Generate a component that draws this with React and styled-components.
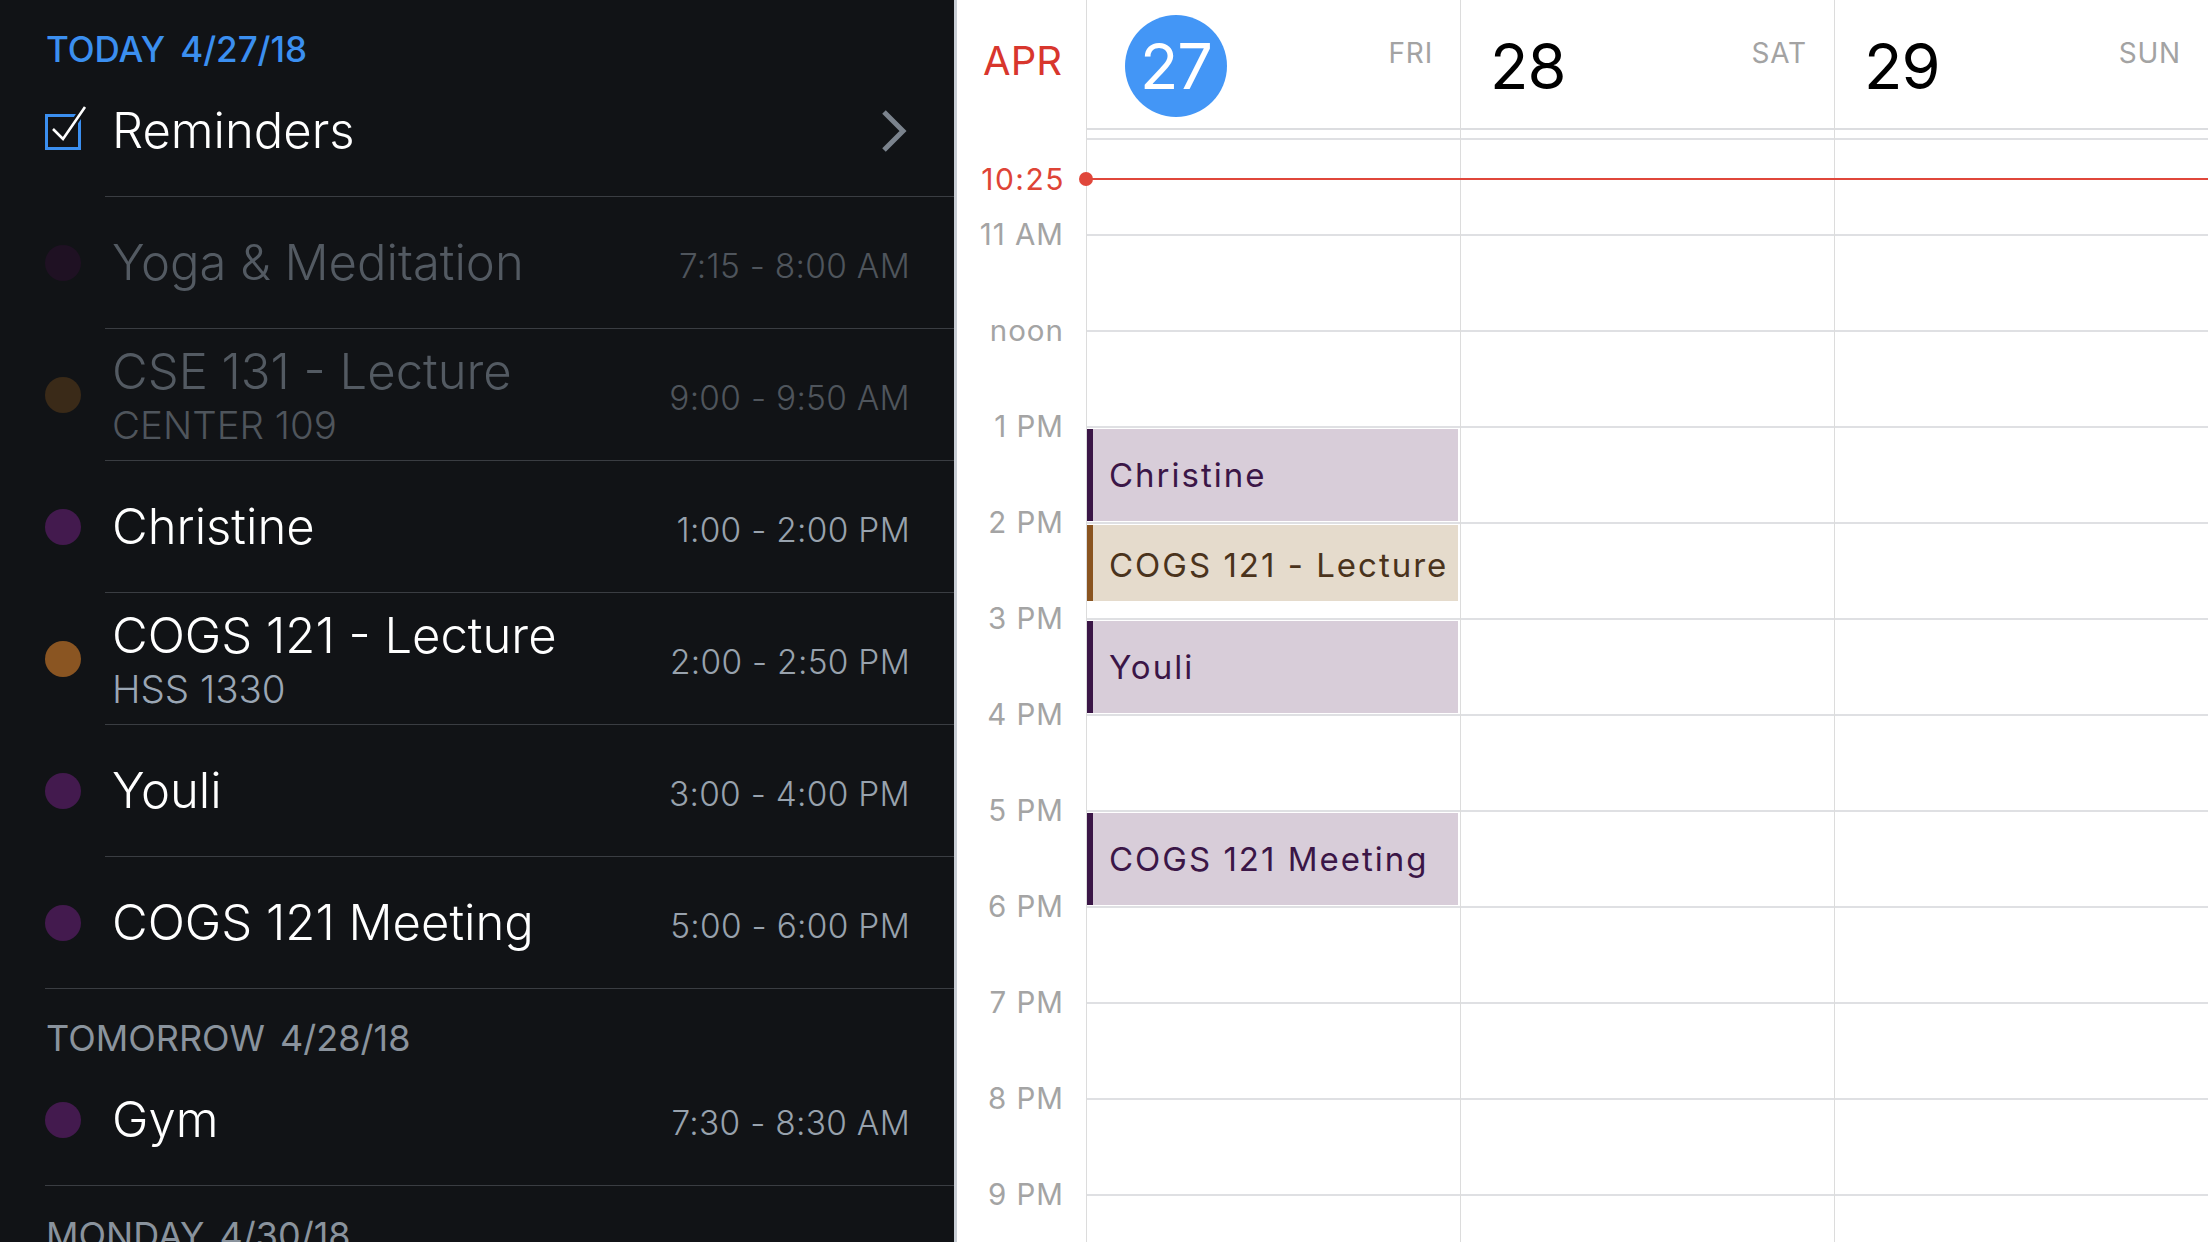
import React from "react";
import styled, { createGlobalStyle } from "styled-components";

const HOUR = 96;

const GlobalStyle = createGlobalStyle`
  html, body {
    margin: 0;
    padding: 0;
    background: #111316;
  }
  body {
    width: 2208px;
    height: 1242px;
    overflow: hidden;
    font-family: Inter, "Noto Sans", "Liberation Sans", sans-serif;
  }
  * {
    box-sizing: border-box;
  }
`;

const Screen = styled.div`
  display: flex;
  width: 2208px;
  height: 1242px;
  overflow: hidden;
`;

/* ---------- left list ---------- */

const Sidebar = styled.div`
  width: 957px;
  flex: none;
  background: #111316;
  border-right: 3px solid #c8cdd4;
  overflow: hidden;
  color: #fff;
`;

const SectionHead = styled.div`
  height: 65px;
  padding: ${(p) => (p.$today ? 32 : 31)}px 0 0 46px;
  font-size: ${(p) => (p.$today ? "35px" : "36px")};
  line-height: 1;
  font-weight: ${(p) => (p.$today ? 500 : 400)};
  color: ${(p) => (p.$today ? "#3b8ff0" : "#8a939d")};
  white-space: nowrap;

  span + span {
    margin-left: 15px;
  }
`;

const Row = styled.div`
  height: 131px;
  display: flex;
  align-items: center;
  padding: 0 44px 0 45px;
`;

const Rule = styled.div`
  height: 1px;
  margin-left: ${(p) => p.$inset}px;
  background: #3a3d42;
`;

const CheckIcon = styled.svg`
  flex: none;
  width: 42px;
  height: 46px;
  margin: -6px 25px 0 0;
`;

const RowTitle = styled.div`
  flex: 1;
  font-size: 49px;
  font-weight: 300;
  line-height: 60px;
  color: ${(p) => (p.$past ? "#535a62" : "#ffffff")};
  white-space: nowrap;
`;

const Chevron = styled.svg`
  flex: none;
  width: 27px;
  height: 44px;
  margin-right: 3px;
`;

const Dot = styled.div`
  flex: none;
  width: 36px;
  height: 36px;
  border-radius: 50%;
  margin-right: 31px;
  background: ${(p) => p.$color};
`;

const TitleBlock = styled.div`
  flex: 1;
  display: flex;
  flex-direction: column;
  min-width: 0;
`;

const SubTitle = styled.div`
  font-size: 38.5px;
  font-weight: 300;
  line-height: 46px;
  color: ${(p) => (p.$past ? "#4f555c" : "#9aa6b4")};
  white-space: nowrap;
`;

const TimeRange = styled.div`
  flex: none;
  padding-top: 7px;
  font-size: 33.4px;
  font-weight: 300;
  letter-spacing: 0.3px;
  color: ${(p) => (p.$past ? "#4f555c" : "#98a2ad")};
  white-space: nowrap;
`;

/* ---------- right calendar ---------- */

const Calendar = styled.div`
  flex: 1;
  display: flex;
  flex-direction: column;
  background: #ffffff;
  overflow: hidden;
`;

const HeadRow = styled.div`
  display: grid;
  grid-template-columns: 129px repeat(3, 1fr);
  flex: none;
`;

const MonthCell = styled.div`
  padding: 41px 24px 0 0;
  text-align: right;
  font-size: 40px;
  line-height: 1;
  color: #d8362d;
`;

const DayHead = styled.div`
  display: flex;
  flex-direction: column;
  border-left: 1px solid #dcdcdc;
`;

const DayTop = styled.div`
  height: 130px;
  display: flex;
  justify-content: space-between;
  align-items: flex-start;
  padding: 0 27px 0 ${(p) => (p.$today ? 38 : 29)}px;
  border-bottom: 2px solid #dcdde0;
`;

const DayNum = styled.div`
  width: ${(p) => (p.$today ? "102px" : "auto")};
  height: 102px;
  margin-top: 15px;
  display: flex;
  align-items: center;
  justify-content: center;
  border-radius: 50%;
  background: ${(p) => (p.$today ? "#4396f6" : "transparent")};
  color: ${(p) => (p.$today ? "#ffffff" : "#000000")};
  font-size: 63px;
  line-height: 1;
  letter-spacing: -1px;
`;

const DayName = styled.div`
  margin-top: 39px;
  font-size: 28px;
  line-height: 1;
  letter-spacing: 0.8px;
  color: #a3a3a3;
`;

const AllDayStrip = styled.div`
  height: 8px;
`;

const Body = styled.div`
  flex: 1;
  position: relative;
  display: grid;
  grid-template-columns: 129px repeat(3, 1fr);
  overflow: hidden;
`;

const Gutter = styled.div`
  display: flex;
  flex-direction: column;
  padding-top: 48px;
`;

const HourLabel = styled.div`
  height: ${HOUR}px;
  flex: none;
  display: flex;
  align-items: center;
  justify-content: flex-end;
  padding-right: 22px;
  font-size: 29.5px;
  letter-spacing: 1px;
  color: #a4a4a4;
`;

const DayColumn = styled.div`
  position: relative;
  display: flex;
  flex-direction: column;
  border-left: 1px solid #dcdcdc;
`;

const HourCell = styled.div`
  height: ${HOUR}px;
  flex: none;
  border-top: 2px solid #dfe0e3;
`;

const EventBlock = styled.div`
  position: absolute;
  left: 0;
  right: 2px;
  padding: 26px 0 0 16px;
  background: ${(p) => p.$bg};
  border-left: 6px solid ${(p) => p.$bar};
  color: ${(p) => p.$ink};
  font-size: 33px;
  letter-spacing: 2px;
  line-height: 40px;
  white-space: nowrap;
  overflow: hidden;
`;

const NowMarker = styled.div`
  position: absolute;
  left: 0;
  right: 0;
  top: 23px;
  height: 30px;
  display: grid;
  grid-template-columns: 129px 1fr;
  align-items: center;
  pointer-events: none;
`;

const NowLabel = styled.div`
  padding-right: 21px;
  text-align: right;
  font-size: 30px;
  letter-spacing: 1.5px;
  color: #de4436;
`;

const NowLine = styled.div`
  position: relative;
  height: 2px;
  background: #e0473b;

  &::before {
    content: "";
    position: absolute;
    left: -7px;
    top: -6px;
    width: 14px;
    height: 14px;
    border-radius: 50%;
    background: #e0473b;
  }
`;

const PURPLE = "#431a4e";
const ORANGE = "#8a5522";

const today = [
  { title: "Yoga & Meditation", time: "7:15 - 8:00 AM", dot: "#1f1123", past: true },
  { title: "CSE 131 - Lecture", sub: "CENTER 109", time: "9:00 - 9:50 AM", dot: "#3a2a18", past: true },
  { title: "Christine", time: "1:00 - 2:00 PM", dot: PURPLE },
  { title: "COGS 121 - Lecture", sub: "HSS 1330", time: "2:00 - 2:50 PM", dot: ORANGE },
  { title: "Youli", time: "3:00 - 4:00 PM", dot: PURPLE },
  { title: "COGS 121 Meeting", time: "5:00 - 6:00 PM", dot: PURPLE },
];

const hours = ["11 AM", "noon", "1 PM", "2 PM", "3 PM", "4 PM", "5 PM", "6 PM", "7 PM", "8 PM", "9 PM"];

const purpleEvent = { bg: "#d8cdd9", bar: "#3b1647", ink: "#3b1647" };
const tanEvent = { bg: "#e5dbcc", bar: "#8a5420", ink: "#4a331c" };

// start is hours after 10 AM, length in minutes
const events = [
  { title: "Christine", start: 3, mins: 60, ...purpleEvent },
  { title: "COGS 121 - Lecture", start: 4, mins: 50, ...tanEvent },
  { title: "Youli", start: 5, mins: 60, ...purpleEvent },
  { title: "COGS 121 Meeting", start: 7, mins: 60, ...purpleEvent },
];

const days = [
  { num: "27", name: "FRI", today: true },
  { num: "28", name: "SAT" },
  { num: "29", name: "SUN" },
];

const EventRow = ({ ev }) => (
  <Row>
    <Dot $color={ev.dot} />
    <TitleBlock>
      <RowTitle $past={ev.past}>{ev.title}</RowTitle>
      {ev.sub ? <SubTitle $past={ev.past}>{ev.sub}</SubTitle> : null}
    </TitleBlock>
    <TimeRange $past={ev.past}>{ev.time}</TimeRange>
  </Row>
);

const Agenda = () => (
  <Sidebar>
    <SectionHead $today>
      <span>TODAY</span>
      <span>4/27/18</span>
    </SectionHead>
    <Row>
      <CheckIcon viewBox="0 0 42 46">
        <rect x="1.5" y="10.5" width="33" height="33" fill="none" stroke="#3b8ff0" strokeWidth="3" />
        <path d="M8 24 L18 34 L40 2" fill="none" stroke="#111316" strokeWidth="7" />
        <path d="M8 24 L18 34 L40 2" fill="none" stroke="#ffffff" strokeWidth="2.6" />
      </CheckIcon>
      <RowTitle>Reminders</RowTitle>
      <Chevron viewBox="0 0 27 44">
        <polyline points="4,3 23,22 4,41" fill="none" stroke="#7b838d" strokeWidth="5" />
      </Chevron>
    </Row>
    <Rule $inset={105} />
    {today.map((ev, i) => (
      <React.Fragment key={ev.title}>
        <EventRow ev={ev} />
        <Rule $inset={i === today.length - 1 ? 45 : 105} />
      </React.Fragment>
    ))}
    <SectionHead>
      <span>TOMORROW</span>
      <span>4/28/18</span>
    </SectionHead>
    <EventRow ev={{ title: "Gym", time: "7:30 - 8:30 AM", dot: PURPLE }} />
    <Rule $inset={45} />
    <SectionHead>
      <span>MONDAY</span>
      <span>4/30/18</span>
    </SectionHead>
  </Sidebar>
);

const WeekView = () => (
  <Calendar>
    <HeadRow>
      <MonthCell>APR</MonthCell>
      {days.map((d) => (
        <DayHead key={d.num}>
          <DayTop $today={d.today}>
            <DayNum $today={d.today}>{d.num}</DayNum>
            <DayName>{d.name}</DayName>
          </DayTop>
          <AllDayStrip />
        </DayHead>
      ))}
    </HeadRow>
    <Body>
      <Gutter>
        {hours.map((h) => (
          <HourLabel key={h}>{h}</HourLabel>
        ))}
      </Gutter>
      {days.map((d) => (
        <DayColumn key={d.num}>
          {Array.from({ length: 12 }).map((_, i) => (
            <HourCell key={i} />
          ))}
          {d.today
            ? events.map((ev) => (
                <EventBlock
                  key={ev.title}
                  $bg={ev.bg}
                  $bar={ev.bar}
                  $ink={ev.ink}
                  style={{
                    top: ev.start * HOUR + 3,
                    height: (ev.mins / 60) * HOUR - 4,
                    paddingTop: ev.mins < 60 ? 20 : 26,
                  }}
                >
                  {ev.title}
                </EventBlock>
              ))
            : null}
        </DayColumn>
      ))}
      <NowMarker>
        <NowLabel>10:25</NowLabel>
        <NowLine />
      </NowMarker>
    </Body>
  </Calendar>
);

export default function App() {
  return (
    <>
      <GlobalStyle />
      <Screen>
        <Agenda />
        <WeekView />
      </Screen>
    </>
  );
}
